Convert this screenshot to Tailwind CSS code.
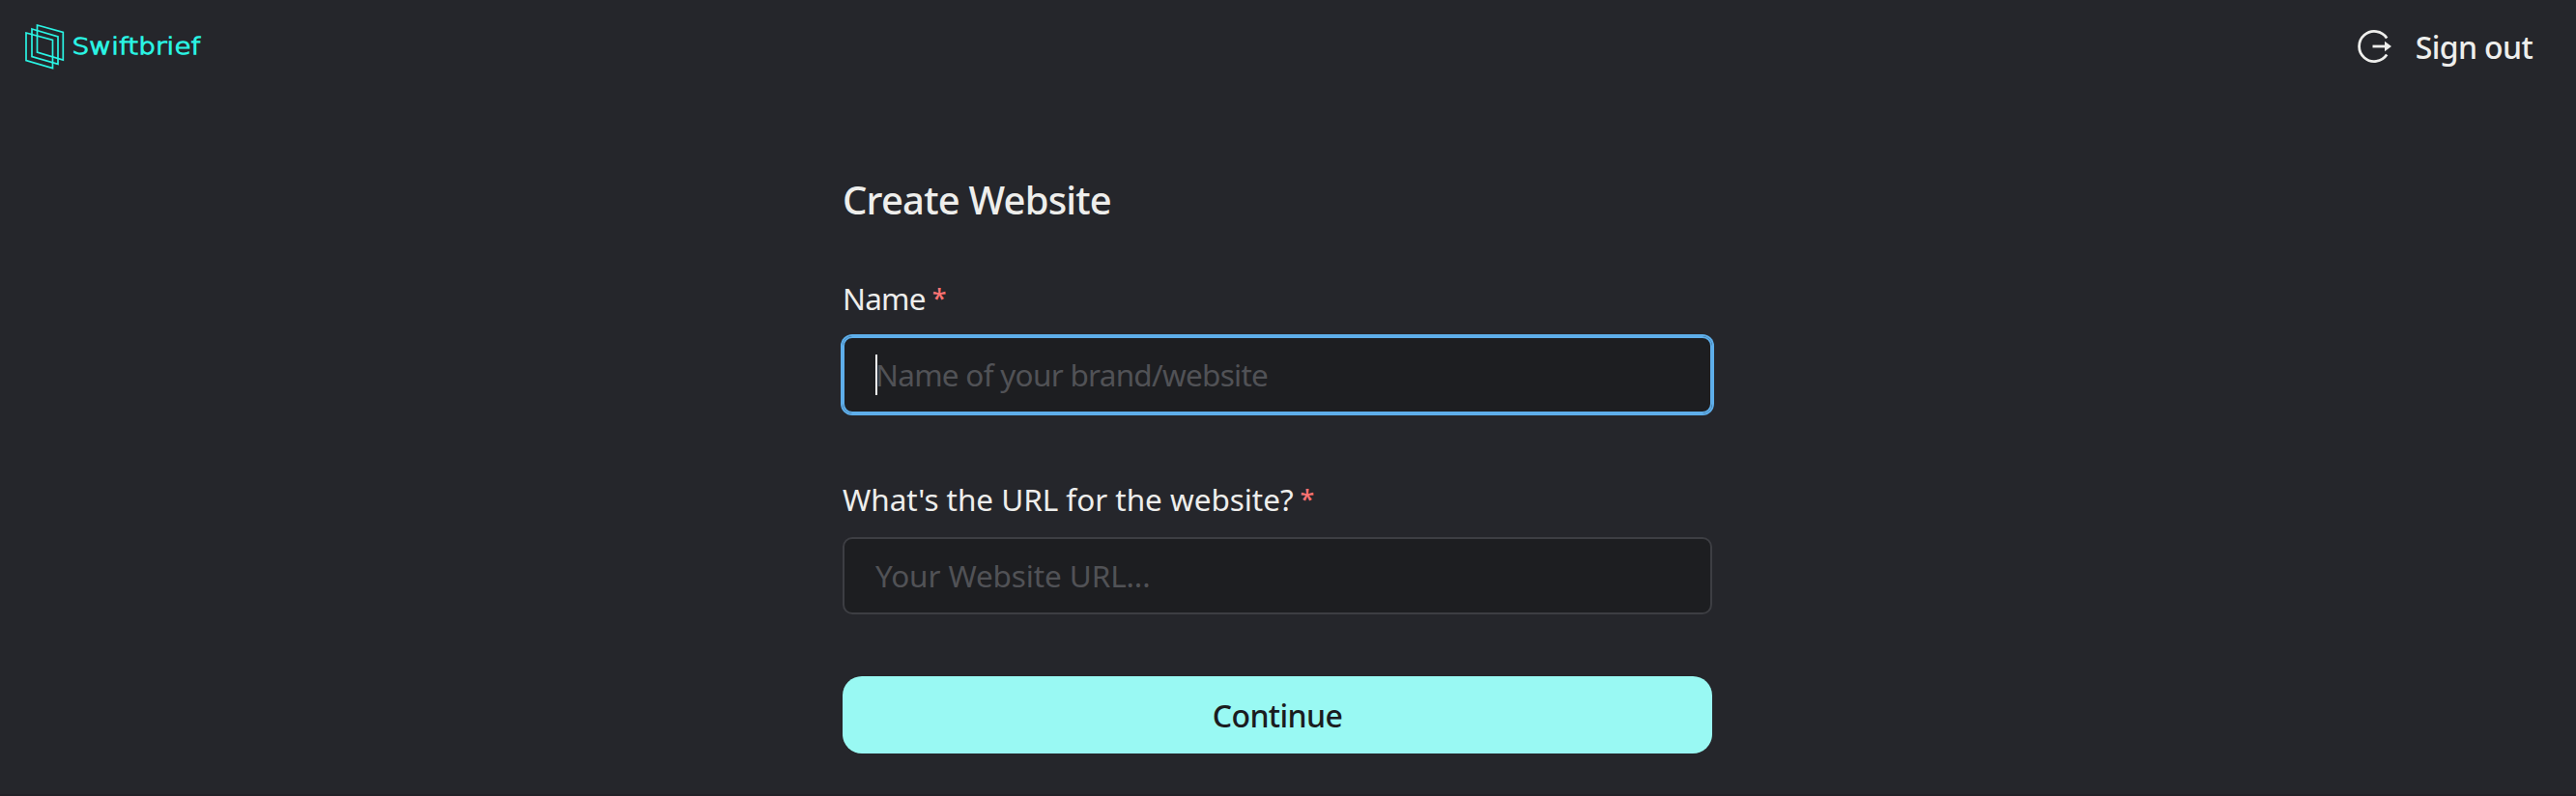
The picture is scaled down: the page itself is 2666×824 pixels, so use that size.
<!DOCTYPE html>
<html lang="en">
<head>
<meta charset="utf-8">
<title>Swiftbrief</title>
<script src="https://cdn.jsdelivr.net/npm/@tailwindcss/browser@4"></script>
</head>
<body class="flex h-screen flex-col overflow-hidden border-b-2 border-[#222127] bg-[#25262b] font-['Noto_Sans',sans-serif] text-[31.5px] leading-[50px] font-normal text-[#eeeeec]">
<header class="flex h-24 shrink-0 items-center justify-between pr-[45px] pl-6">
  <a href="#" class="block">
    <svg class="h-[52px] w-[188px]" viewBox="24 22 188 52" fill="none" stroke="#2af3e3" stroke-width="1.7">
      <path d="M27 34 54.5 41.5V70.5L27 62.5Z"/>
      <path d="M33 30 60 38V66.3L33 58.5Z"/>
      <path d="M38.5 26 65.3 33.5V62L38.5 54Z"/>
      <text x="74.5" y="56" textLength="133" lengthAdjust="spacingAndGlyphs" fill="#2af3e3" stroke-width="1.3" font-family="DejaVu Sans" font-weight="200" font-size="23.5">Swiftbrief</text>
    </svg>
  </a>
  <button class="flex items-center gap-[23px] text-[32px] font-medium tracking-[-0.65px]">
    <svg class="h-10 w-10" viewBox="2437 28 40 40" fill="none" stroke="#eeeeec" stroke-width="2.8">
      <path d="M2470.2 39.4A15.6 15.6 0 1 0 2470.2 56.6"/>
      <path d="M2455.5 48H2469"/>
      <path d="M2468 42.8 2475 48 2468 53.2Z" fill="#eeeeec" stroke="none"/>
    </svg>
    <span class="pt-0.5">Sign out</span>
  </button>
</header>
<main class="ml-[872px] flex w-[900px] flex-col pt-[85px]">
  <h1 class="text-[40px] leading-[52px] font-medium tracking-[-0.8px]">Create Website</h1>
  <label class="mt-[51px] flex h-[50px] gap-[7px]"><span class="tracking-[-0.8px]">Name</span><span class="text-[27px] font-medium text-[#fa7272]">*</span></label>
  <div class="mt-[14px] flex h-20 items-center rounded-[10px] bg-[#1d1e21] pl-[34px] text-[#515256] ring-2 ring-[#5eaeea] outline-2 -outline-offset-2 outline-[#5eaeea]">
    <span class="-mr-0.5 h-[42px] w-0.5 bg-white"></span><span class="tracking-[-0.73px]">Name of your brand/website</span>
  </div>
  <label class="mt-[64px] flex h-[50px] gap-[7px]"><span class="tracking-[-0.04px]">What's the URL for the website?</span><span class="text-[27px] font-medium text-[#fa7272]">*</span></label>
  <div class="mt-[14px] flex h-20 items-center rounded-[10px] border-2 border-[#3d3e43] bg-[#1d1e21] pl-8 tracking-[-0.12px] text-[#515256]">Your Website URL...</div>
  <button class="mt-16 h-20 rounded-[20px] bg-[#99f9f3] pt-0.5 text-[32px] font-medium tracking-[-0.6px] text-[#1b1c1f]">Continue</button>
</main>
</body>
</html>
